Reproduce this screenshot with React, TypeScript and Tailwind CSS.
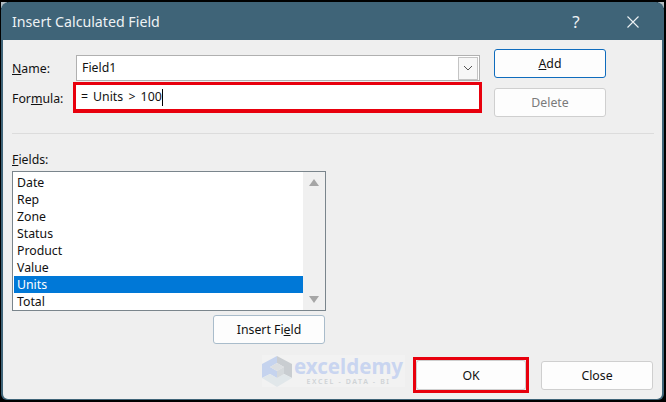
const font = { fontFamily: '"Noto Sans", sans-serif' };

function Btn({ children, className }: { children: React.ReactNode; className: string }) {
  return (
    <div className={`flex items-center justify-center w-[112px] h-[29px] rounded-[3px] bg-[#fdfdfd] pt-[2px] ${className}`}>
      {children}
    </div>
  );
}

const fields = ["Date", "Rep", "Zone", "Status", "Product", "Value", "Units", "Total"];

export default function App() {
  return (
    <div className="isolate w-[666px] h-[402px] bg-black pt-[2px] pb-[2px] overflow-hidden" style={font}>
      <div className="relative w-[663px] h-[398px] ml-[1px] bg-[#3f6478] rounded-t-[8px] rounded-b-[6px] pl-[2px] pr-[2px] pb-[1px] flex flex-col">
        <div className="absolute left-0 top-0 w-[6px] h-[6px] bg-[#b4bec4] -z-10" />
        <div className="absolute right-0 top-0 w-[6px] h-[6px] bg-[#b4bec4] -z-10" />
        <div className="h-[38px] shrink-0 flex items-center pl-[9px] pt-[1px] text-[#eef2f4] text-[14.2px]">
          <span className="flex-1">Insert Calculated Field</span>
          <span className="w-[20px] text-center text-[17px] mr-[41px]">?</span>
          <svg width="12" height="12" viewBox="0 0 12 12" className="mr-[23px]" fill="none" stroke="#eef2f4" strokeWidth="1.1">
            <path d="M0.5 0.5 L11.5 11.5 M11.5 0.5 L0.5 11.5" />
          </svg>
        </div>
        <div className="flex-1 bg-[#efefef] rounded-b-[5px] pl-[9px] pr-[8px] text-[12.3px] text-[#111] flex flex-col">
          <div className="flex h-[94px] border-b border-[#dcdcdc]">
            <div className="w-[470px] pt-[15px] shrink-0">
              <div className="flex items-center h-[26px]">
                <span className="w-[64px] pt-[2px]"><u>N</u>ame:</span>
                <div className="w-[404px] h-[26px] border border-[#b0b0b0] bg-white flex items-center pl-[5px] pr-[1px]">
                  <span className="flex-1 pt-[1px]">Field1</span>
                  <div className="w-[20px] h-[23px] border border-[#c4c4c4] bg-[#f7f7f7] flex items-center justify-center">
                    <svg width="10" height="6" viewBox="0 0 10 6" fill="none" stroke="#555" strokeWidth="1"><path d="M1 1 L5 5 L9 1" /></svg>
                  </div>
                </div>
              </div>
              <div className="flex items-center h-[31px] mt-[1px]">
                <span className="w-[61px] pt-[3px]">For<u>m</u>ula:</span>
                <div className="w-[410px] h-[31px] border-[3px] border-[#e8000d] border-b-[4px] bg-white flex items-center pl-[5px]">
                  <span className="[word-spacing:2px] pt-[1px]">= Units &gt; 100</span>
                  <span className="w-[1px] h-[17px] bg-black" />
                </div>
              </div>
            </div>
            <div className="ml-[12px] pt-[9px] flex flex-col gap-[10px]">
              <Btn className="border-[1.5px] border-[#0f6cbd] text-[#111]"><span><u>A</u>dd</span></Btn>
              <Btn className="border border-[#cfcfcf] text-[#7a7a7a]">Delete</Btn>
            </div>
          </div>
          <div className="mt-[15px] h-[20px] leading-[20px] pt-[1px]"><u>F</u>ields:</div>
          <div className="w-[314px] h-[140px] mt-[2px] border border-[#7a858c] bg-white flex">
            <div className="flex-1 pt-[2px] pl-[1px]">
              {fields.map((f) => (
                <div
                  key={f}
                  className={`h-[17px] leading-[17px] pl-[3px] ${f === "Units" ? "bg-[#0078d7] text-white" : ""}`}
                >
                  {f}
                </div>
              ))}
            </div>
            <div className="w-[22px] bg-[#f0f0f0] flex flex-col items-center justify-between py-[7px] shrink-0">
              <svg width="10" height="7" viewBox="0 0 10 7" fill="#a6a6a6"><path d="M5 0 L10 7 L0 7 Z" /></svg>
              <svg width="10" height="7" viewBox="0 0 10 7" fill="#a6a6a6"><path d="M0 0 L10 0 L5 7 Z" /></svg>
            </div>
          </div>
          <div className="w-[313px] flex justify-end mt-[4px]">
            <Btn className="border border-[#a9bccb] text-[#111]"><span>Insert Fi<u>e</u>ld</span></Btn>
          </div>
          <div className="flex justify-end mt-[13px] pr-[1px] items-center">
            <div className="border-[3px] border-[#e8000d] w-[116px] h-[36px] flex items-center justify-center">
              <Btn className="border border-[#cfcfcf] !w-[110px] !h-[30px] text-[#111]">OK</Btn>
            </div>
            <Btn className="border border-[#cfcfcf] ml-[12px] text-[#111]">Close</Btn>
          </div>
        </div>
        <div className="absolute left-[261px] top-[353px] w-[143px] h-[32px] flex items-center bg-[#f2f2f2]">
          <svg width="31" height="31" viewBox="0 0 31 31" className="shrink-0">
            <path d="M15 0 L0 8 L0 22 L8 18 L15 22 L15 15 L8 11 L15 7 Z" fill="#c5d3ee" />
            <path d="M15 0 L30 8 L30 22 L22 18 L22 11 L15 7 Z" fill="#c9cdd1" />
            <path d="M0 22 L8 18 L15 22 L22 18 L30 22 L15 31 Z" fill="#e1e7ea" />
            <path d="M8 11 L15 7 L22 11 L15 15 Z" fill="#dcdfe2" />
            <path d="M15 15 L22 11 L22 18 L15 22 Z" fill="#d5d9dc" />
          </svg>
          <div className="flex flex-col items-center ml-[1px] -mt-[1px]">
            <span className="text-[20.5px] leading-[22px] font-bold text-[#c9d5f0]">exceldemy</span>
            <span className="text-[7px] leading-[9px] font-semibold tracking-[1.6px] text-[#cfd3d6] whitespace-nowrap">EXCEL - DATA - BI</span>
          </div>
        </div>
      </div>
    </div>
  );
}
